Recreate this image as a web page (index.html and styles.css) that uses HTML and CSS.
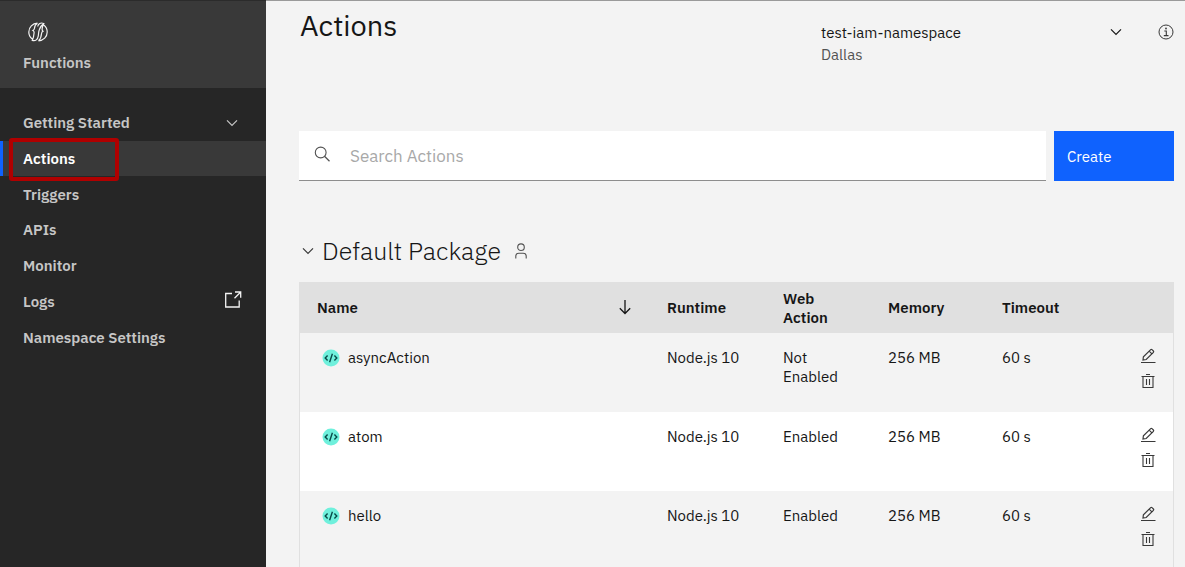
FILE: index.html
```html
<!DOCTYPE html>
<html lang="en">
<head>
<meta charset="utf-8">
<meta name="viewport" content="width=device-width, initial-scale=1">
<title>Actions - Functions</title>
<link rel="stylesheet" href="styles.css">
</head>
<body>
<svg class="sprite" aria-hidden="true">
  <symbol id="chevron" viewBox="0 0 16 16"><path d="M3 5.300l5 5L13 5.300" fill="none" stroke="currentColor" stroke-width="1.200"/></symbol>
  <symbol id="code" viewBox="0 0 18 18"><circle cx="9" cy="9" r="8.500" fill="#6ff0dc"/><path d="M5.600 6.500L3.200 9l2.400 2.500M12.400 6.500L14.800 9l-2.400 2.500M10.400 4.800L7.600 13.200" fill="none" stroke="#084a48" stroke-width="1.400"/></symbol>
  <symbol id="edit" viewBox="0 0 16 16"><path d="M1 14.500h14.500M3 12l.4-3.200 7.300-7.200q.6-.6 1.300 0l1.400 1.400q.6.600 0 1.300L6.200 11.500zM9.200 3.200l2.700 2.700" fill="none" stroke="currentColor" stroke-width="1.200"/></symbol>
  <symbol id="trash" viewBox="0 0 16 16"><path d="M6 1.500h4M1.500 3.500h13M3 3.500v11h10v-11M6.500 6v6M9.500 6v6" fill="none" stroke="currentColor" stroke-width="1.100"/></symbol>
</svg>
<div class="shell">
  <aside class="sidebar">
    <div class="brand">
      <svg class="brand-icon" viewBox="0 0 20 20" aria-hidden="true"><path d="M9.500 1.200C4.600 1.500.8 5.200.8 10c0 2.900 1.300 5.400 3.500 7M10.500 18.800c4.900-.3 8.700-4 8.700-8.800 0-2.900-1.300-5.400-3.500-7M9.500 1.200C7.200 2.300 6.600 4 6.500 6.300 6.400 7.300 6 7.900 4.900 8.500c1 .5 1.300 1.200 1.200 2.300C5.900 13.600 5.500 16 4.300 18.500c3.300.9 5.400-1 6-4.700.3-2 .1-3.900 1-6.100C12.300 5 13.500 3 15.700 1.500 12.500.2 10.300 1.600 9.700 4.500M15.700 1.500c-1 2-1.500 3.600-1.600 5.500-.1 1.100.1 1.700.9 2.300-1.100.5-1.400 1.200-1.500 2.400-.2 2.800-.9 5.300-3 7.100" fill="none" stroke="currentColor" stroke-width="1.200"/></svg>
      <span class="brand-name">Functions</span>
    </div>
    <nav class="nav" aria-label="Functions">
      <button class="nav-item" type="button" aria-expanded="false">Getting Started<svg class="icon" aria-hidden="true"><use href="#chevron"/></svg></button>
      <a class="nav-item nav-item-active" href="#actions" aria-current="page">Actions<span class="highlight"></span></a>
      <a class="nav-item" href="#triggers">Triggers</a>
      <a class="nav-item" href="#apis">APIs</a>
      <a class="nav-item" href="#monitor">Monitor</a>
      <a class="nav-item" href="#logs">Logs<svg class="icon launch" viewBox="0 0 18 18" aria-hidden="true"><path d="M8 2.500H1.700v13.500h13.500V9.500M11 1h5.700v5.700M16.500 1.200L10.500 7.200" fill="none" stroke="currentColor" stroke-width="1.300"/></svg></a>
      <a class="nav-item" href="#settings">Namespace Settings</a>
    </nav>
  </aside>
  <main class="main">
    <header class="header">
      <h1 class="title">Actions</h1>
      <button class="namespace" type="button" aria-haspopup="listbox">
        <span class="namespace-text"><span class="namespace-name">test-iam-namespace</span><span class="namespace-region">Dallas</span></span>
        <svg class="icon" aria-hidden="true"><use href="#chevron"/></svg>
      </button>
      <button class="icon-button" type="button" aria-label="Information"><svg class="icon" viewBox="0 0 16 16" aria-hidden="true"><circle cx="8" cy="8" r="7" fill="none" stroke="currentColor" stroke-width="1"/><path d="M6.300 7h2v4.500M5.800 11.600h4.700" fill="none" stroke="currentColor" stroke-width="1.100"/><circle cx="8" cy="4.500" r=".9" fill="currentColor"/></svg></button>
    </header>
    <div class="toolbar">
      <label class="search">
        <svg class="icon" viewBox="0 0 16 16" aria-hidden="true"><circle cx="6.700" cy="6.500" r="5.400" fill="none" stroke="currentColor" stroke-width="1.100"/><path d="M10.500 10.300l5 4.900" stroke="currentColor" stroke-width="1.200"/></svg>
        <input class="search-input" type="search" placeholder="Search Actions" aria-label="Search Actions">
      </label>
      <button class="create" type="button">Create</button>
    </div>
    <div class="package">
      <button class="icon-button" type="button" aria-label="Collapse Default Package" aria-expanded="true"><svg class="icon" aria-hidden="true"><use href="#chevron"/></svg></button>
      <h2 class="package-name">Default Package</h2>
      <svg class="icon person" viewBox="0 0 16 16" aria-hidden="true"><circle cx="8" cy="4.200" r="3.300" fill="none" stroke="currentColor" stroke-width="1.100"/><path d="M2.800 15.500v-2.300q0-3 3-3h4.400q3 0 3 3v2.300" fill="none" stroke="currentColor" stroke-width="1.100"/></svg>
    </div>
    <table class="table">
      <thead>
        <tr>
          <th scope="col"><span class="sort">Name<svg class="icon" viewBox="0 0 16 16" aria-hidden="true"><path d="M8 0v13.500M2.800 8.300L8 13.500l5.200-5.200" fill="none" stroke="currentColor" stroke-width="1.300"/></svg></span></th>
          <th class="col-runtime" scope="col">Runtime</th>
          <th class="col-web" scope="col">Web Action</th>
          <th class="col-memory" scope="col">Memory</th>
          <th class="col-timeout" scope="col">Timeout</th>
          <th class="col-tools" aria-label="Tools"></th>
        </tr>
      </thead>
      <tbody>
        <tr>
          <td><span class="action"><svg class="code" aria-hidden="true"><use href="#code"/></svg>asyncAction</span></td>
          <td>Node.js 10</td><td>Not Enabled</td><td>256 MB</td><td>60 s</td>
          <td class="tools-cell"><div class="tools"><button class="icon-button" type="button" aria-label="Edit asyncAction"><svg class="icon"><use href="#edit"/></svg></button><button class="icon-button" type="button" aria-label="Delete asyncAction"><svg class="icon"><use href="#trash"/></svg></button></div></td>
        </tr>
        <tr>
          <td><span class="action"><svg class="code" aria-hidden="true"><use href="#code"/></svg>atom</span></td>
          <td>Node.js 10</td><td>Enabled</td><td>256 MB</td><td>60 s</td>
          <td class="tools-cell"><div class="tools"><button class="icon-button" type="button" aria-label="Edit atom"><svg class="icon"><use href="#edit"/></svg></button><button class="icon-button" type="button" aria-label="Delete atom"><svg class="icon"><use href="#trash"/></svg></button></div></td>
        </tr>
        <tr>
          <td><span class="action"><svg class="code" aria-hidden="true"><use href="#code"/></svg>hello</span></td>
          <td>Node.js 10</td><td>Enabled</td><td>256 MB</td><td>60 s</td>
          <td class="tools-cell"><div class="tools"><button class="icon-button" type="button" aria-label="Edit hello"><svg class="icon"><use href="#edit"/></svg></button><button class="icon-button" type="button" aria-label="Delete hello"><svg class="icon"><use href="#trash"/></svg></button></div></td>
        </tr>
      </tbody>
    </table>
  </main>
</div>
</body>
</html>
```
FILE: styles.css
```css
* { box-sizing: border-box; }
body {
  margin: 0;
  background: #f3f3f3;
  color: #161616;
  font: 15px/19px "IBM Plex Sans", Roboto, sans-serif;
}
button, input { font: inherit; color: inherit; border: 0; border-radius: 0; background: none; padding: 0; text-align: left; }
h1, h2 { margin: 0; }
svg { display: block; flex: none; }
.sprite { position: absolute; width: 0; height: 0; }
.icon { width: 16px; height: 16px; }
.icon-button { color: #393939; cursor: pointer; }
.shell { display: flex; height: 100vh; overflow: hidden; }

.sidebar { flex: none; width: 266px; background: #262626; color: #c6c6c6; font-weight: 600; }
.brand {
  height: 88px;
  padding: 21px 23px 0;
  border-top: 1px solid #2b2b2b;
  background: #393939;
}
.brand-icon { width: 20px; height: 20px; margin: 0 0 11px 5px; color: #f4f4f4; }
.brand-name { display: block; }
.nav { display: grid; grid-template-rows: repeat(7, 1fr); height: 250px; margin-top: 17px; }
.nav-item {
  position: relative;
  display: flex;
  align-items: center;
  justify-content: space-between;
  padding: 0 24px 0 23px;
  color: inherit;
  text-decoration: none;
}
.nav-item .icon { margin-right: 2px; }
.nav-item .launch { width: 18px; height: 18px; margin: 0 0 2px; color: #f4f4f4; }
.nav-item-active { background: #393939; color: #fff; box-shadow: inset 3px 0 #0f62fe; }
.highlight { position: absolute; left: 9px; top: -3px; width: 110px; height: 43px; border: 4px solid #b00000; border-radius: 3px; }

.main { flex: 1; min-width: 0; padding: 0 11px 0 33px; border-top: 1px solid #9a9a9a; }
.header { display: flex; align-items: flex-start; height: 130px; padding-top: 7px; }
.title { flex: 1; padding-left: 1px; font-size: 29px; line-height: 34px; font-weight: 400; }
.namespace { display: flex; justify-content: space-between; align-items: flex-start; width: 303px; margin-right: 34px; padding-top: 14px; line-height: 22px; }
.header .icon { margin-top: 2px; }
.header > .icon-button { padding-top: 14px; }
.namespace-text { display: grid; }
.namespace-region { color: #525252; }

.toolbar { display: flex; gap: 8px; height: 50px; }
.search { display: flex; flex: 1; align-items: center; gap: 20px; padding-left: 15px; background: #fff; border-bottom: 1px solid #8d8d8d; color: #525252; }
.search .icon { margin-bottom: 4px; }
.search-input { flex: 1; padding-top: 2px; font-size: 17px; outline: 0; appearance: none; }
.search-input::placeholder { color: #a8a8a8; opacity: 1; }
.create { width: 120px; padding-left: 13px; background: #0f62fe; color: #fff; }

.package { display: flex; align-items: center; gap: 6px; height: 101px; padding: 39px 0 0 1px; }
.package-name { font-size: 25px; line-height: 36px; font-weight: 300; }
.person { margin-left: 6px; color: #525252; }

.table { width: 100%; table-layout: fixed; border-collapse: separate; border-spacing: 0; border: 1px solid #e0e0e0; border-top: 0; }
.table th, .table td { padding: 6px 17px; text-align: left; }
.table th { height: 51px; background: #e0e0e0; font-weight: 600; }
.table td { height: 79px; padding-top: 15px; vertical-align: top; }
.table tbody tr:nth-child(even) { background: #fff; }
.sort { display: flex; align-items: center; justify-content: space-between; }
.col-runtime { width: 116px; }
.col-web { width: 105px; }
.col-memory { width: 114px; }
.col-timeout { width: 112px; }
.col-tools { width: 76px; }
.action { display: flex; align-items: center; gap: 8px; padding-left: 5px; }
.code { width: 18px; height: 18px; }
.tools { display: grid; justify-content: end; gap: 9px; }
```
